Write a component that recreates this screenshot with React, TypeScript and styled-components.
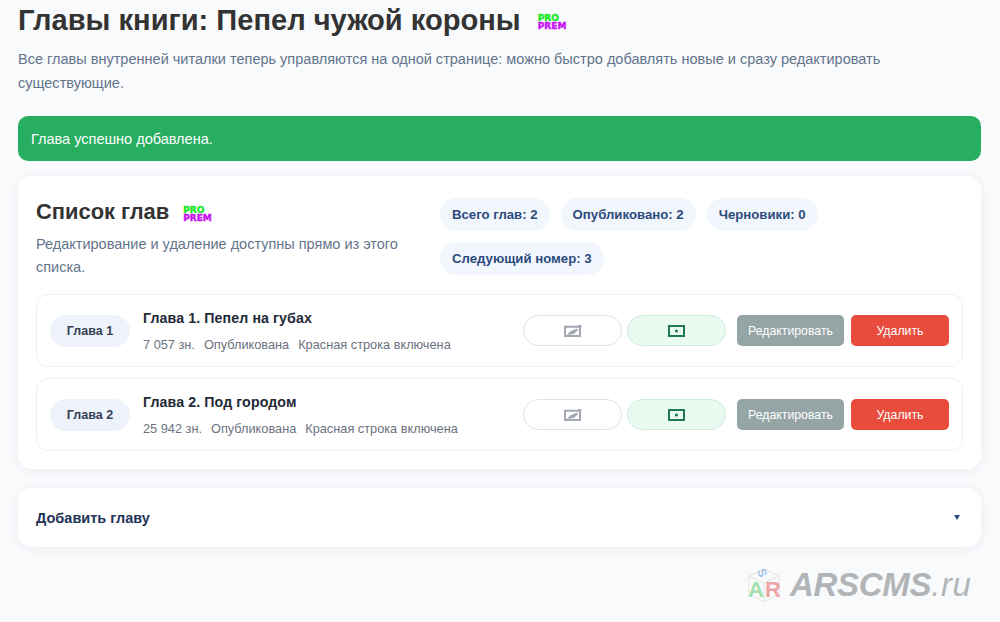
import React from "react";
import styled, { createGlobalStyle } from "styled-components";

const GlobalStyle = createGlobalStyle`
  html, body {
    margin: 0;
    padding: 0;
    background: #f8fafc;
    font-family: "Liberation Sans", Arial, sans-serif;
    overflow: hidden;
  }
`;

const Page = styled.div`
  position: relative;
  width: 1000px;
  height: 622px;
  box-sizing: border-box;
  padding: 0 19px 0 18px;
  overflow: hidden;
`;

const TitleRow = styled.div`
  display: flex;
  align-items: center;
  height: 40px;
`;

const Title = styled.h1`
  margin: 0;
  font-size: 29.1px;
  line-height: 40px;
  font-weight: 700;
  color: #333;
`;

const Intro = styled.p`
  margin: 7px 0 0;
  width: 900px;
  font-size: 14.53px;
  line-height: 24px;
  color: #64748b;
`;

const Alert = styled.div`
  margin-top: 21px;
  height: 45px;
  box-sizing: border-box;
  padding: 0 13px;
  display: flex;
  align-items: center;
  background: #27ae60;
  border-radius: 10px;
  color: #fff;
  font-size: 14.5px;
`;

const Badge = styled.span<{ $offset: number }>`
  display: inline-flex;
  flex-direction: column;
  margin: 3px 0 0 ${(p) => p.$offset}px;
  font-family: "DejaVu Sans", sans-serif;
  font-size: 9px;
  line-height: 8px;
  font-weight: 700;
  -webkit-text-stroke: 0.5px currentColor;
`;

const BadgePro = styled.span`
  color: #1ee82a;
`;

const BadgePrem = styled.span`
  color: #c814f0;
`;

const Card = styled.section`
  margin-top: 15px;
  background: #fff;
  border-radius: 14px;
  box-shadow: 0 2px 12px rgba(30, 50, 90, 0.06);
  padding: 18px;
`;

const CardHead = styled.div`
  display: flex;
  gap: 23px;
  height: 100px;
`;

const HeadText = styled.div`
  width: 381px;
`;

const CardTitleRow = styled.div`
  display: flex;
  align-items: center;
  height: 36px;
`;

const CardTitle = styled.h2`
  margin: 0;
  font-size: 21.9px;
  font-weight: 700;
  color: #333;
`;

const CardNote = styled.p`
  margin: 3px 0 0;
  font-size: 14.5px;
  line-height: 23px;
  color: #64748b;
`;

const Stats = styled.div`
  flex: 1;
  display: flex;
  flex-wrap: wrap;
  align-content: flex-start;
  gap: 11px;
  padding-top: 4px;
`;

const Stat = styled.span`
  height: 33px;
  box-sizing: border-box;
  padding: 0 12px;
  display: flex;
  align-items: center;
  background: #f2f7fd;
  border-radius: 17px;
  font-size: 13.2px;
  font-weight: 700;
  color: #2c4a7c;
`;

const Rows = styled.div`
  display: flex;
  flex-direction: column;
  gap: 11px;
`;

const Row = styled.article`
  height: 73px;
  box-sizing: border-box;
  border: 1px solid #edf0f4;
  border-radius: 12px;
  padding: 0 13px;
  display: flex;
  align-items: center;
`;

const Number = styled.span`
  width: 80px;
  height: 32px;
  flex: none;
  display: flex;
  align-items: center;
  justify-content: center;
  background: #eef2fa;
  border-radius: 16px;
  font-size: 12.5px;
  font-weight: 700;
  color: #334155;
`;

const RowBody = styled.div`
  flex: 1;
  margin-left: 13px;
`;

const RowTitle = styled.div`
  font-size: 14.2px;
  line-height: 18px;
  font-weight: 700;
  color: #1f2937;
  letter-spacing: 0.1px;
`;

const Meta = styled.div`
  margin-top: 10px;
  display: flex;
  gap: 9px;
  font-size: 12.75px;
  line-height: 16px;
  color: #6b7280;
`;

const Actions = styled.div`
  display: flex;
  align-items: center;
  gap: 5px;
`;

const Toggle = styled.span<{ $on?: boolean }>`
  width: 99px;
  height: 31px;
  box-sizing: border-box;
  display: flex;
  align-items: center;
  justify-content: center;
  border-radius: 16px;
  border: 1px solid ${(p) => (p.$on ? "#cfeadb" : "#dfe3e8")};
  background: ${(p) => (p.$on ? "#e9fbf1" : "#fff")};
`;

const ActionButton = styled.button<{ $color: string; $width: number; $gap: number }>`
  width: ${(p) => p.$width}px;
  height: 31px;
  margin-left: ${(p) => p.$gap}px;
  border: 0;
  border-radius: 5px;
  padding: 0;
  background: ${(p) => p.$color};
  color: #fff;
  font-family: inherit;
  font-size: 12.3px;
`;

const AddPanel = styled.div`
  margin-top: 19px;
  height: 59px;
  box-sizing: border-box;
  padding: 0 21px 0 18px;
  display: flex;
  align-items: center;
  justify-content: space-between;
  background: #fff;
  border-radius: 14px;
  box-shadow: 0 2px 12px rgba(30, 50, 90, 0.06);
  font-size: 14.5px;
  font-weight: 700;
  color: #1e3355;
`;

const Caret = styled.span`
  width: 0;
  height: 0;
  border-left: 3px solid transparent;
  border-right: 3px solid transparent;
  border-top: 5px solid #2c4a7c;
`;

const Watermark = styled.div`
  position: absolute;
  left: 746px;
  top: 566px;
  display: flex;
  align-items: center;
  height: 38px;
  pointer-events: none;
`;

const Cube = styled.div`
  position: relative;
  width: 38px;
  height: 38px;
  font-weight: 700;
`;

const CubeLines = styled.svg`
  position: absolute;
  left: 0;
  top: 0;
`;

const CubeLetter = styled.span<{ $x: number; $y: number; $c: string; $s: number; $r: number }>`
  position: absolute;
  left: ${(p) => p.$x}px;
  top: ${(p) => p.$y}px;
  color: ${(p) => p.$c};
  font-size: ${(p) => p.$s}px;
  line-height: 1;
  transform: rotate(${(p) => p.$r}deg);
`;

const Brand = styled.span`
  margin-left: 6px;
  font-size: 33px;
  line-height: 38px;
  font-style: italic;
  font-weight: 700;
  color: #b2b5b8;
  letter-spacing: -0.3px;
`;

const BrandTail = styled.span`
  font-weight: 400;
  letter-spacing: 0.6px;
`;

const ProBadge = ({ offset }: { offset: number }) => (
  <Badge $offset={offset}>
    <BadgePro>PRO</BadgePro>
    <BadgePrem>PREM</BadgePrem>
  </Badge>
);

const chapters = [
  { num: "Глава 1", title: "Глава 1. Пепел на губах", size: "7 057 зн." },
  { num: "Глава 2", title: "Глава 2. Под городом", size: "25 942 зн." },
];

const App = () => {
  return (
    <Page>
      <GlobalStyle />
      <TitleRow>
        <Title>Главы книги: Пепел чужой короны</Title>
        <ProBadge offset={17} />
      </TitleRow>
      <Intro>
        Все главы внутренней читалки теперь управляются на одной странице: можно быстро
        добавлять новые и сразу редактировать существующие.
      </Intro>
      <Alert>Глава успешно добавлена.</Alert>

      <Card>
        <CardHead>
          <HeadText>
            <CardTitleRow>
              <CardTitle>Список глав</CardTitle>
              <ProBadge offset={14} />
            </CardTitleRow>
            <CardNote>Редактирование и удаление доступны прямо из этого списка.</CardNote>
          </HeadText>
          <Stats>
            <Stat>Всего глав: 2</Stat>
            <Stat>Опубликовано: 2</Stat>
            <Stat>Черновики: 0</Stat>
            <Stat>Следующий номер: 3</Stat>
          </Stats>
        </CardHead>
        <Rows>
          {chapters.map((c) => (
            <Row key={c.num}>
              <Number>{c.num}</Number>
              <RowBody>
                <RowTitle>{c.title}</RowTitle>
                <Meta>
                  <span>{c.size}</span>
                  <span>Опубликована</span>
                  <span>Красная строка включена</span>
                </Meta>
              </RowBody>
              <Actions>
                <Toggle>
                  <svg width="18" height="12" viewBox="0 0 18 12">
                    <path d="M1 1.8h15v9.2H1z" fill="none" stroke="#a3a8b2" strokeWidth="2" />
                    <path d="M3 10l3-3.5 7-3 1 1.5-4 4z" fill="#a3a8b2" />
                    <path d="M14 0h3.5v2.5H14z" fill="#a3a8b2" />
                  </svg>
                </Toggle>
                <Toggle $on>
                  <svg width="17" height="12" viewBox="0 0 17 12">
                    <rect x="1" y="1" width="15" height="10" fill="none" stroke="#1f7a4d" strokeWidth="2" />
                    <circle cx="8.5" cy="6" r="1.6" fill="#1f7a4d" />
                  </svg>
                </Toggle>
                <ActionButton $color="#95a5a6" $width={107} $gap={6}>
                  Редактировать
                </ActionButton>
                <ActionButton $color="#e74c3c" $width={98} $gap={2}>
                  Удалить
                </ActionButton>
              </Actions>
            </Row>
          ))}
        </Rows>
      </Card>

      <AddPanel>
        <span>Добавить главу</span>
        <Caret />
      </AddPanel>

      <Watermark>
        <Cube>
          <CubeLines width="38" height="38" viewBox="0 0 38 38">
            <path
              d="M3 10L18 3l15 7-15 7zM3 10v18l15 8 15-8V10M18 17v19"
              fill="none"
              stroke="#e6e3dc"
              strokeWidth="1"
            />
          </CubeLines>
          <CubeLetter $x={12} $y={1} $c="#9cc3e8" $s={12} $r={70}>S</CubeLetter>
          <CubeLetter $x={2} $y={13} $c="#a5e0b0" $s={22} $r={0}>A</CubeLetter>
          <CubeLetter $x={19} $y={13} $c="#eda5a5" $s={22} $r={0}>R</CubeLetter>
        </Cube>
        <Brand>
          ARSCMS<BrandTail>.ru</BrandTail>
        </Brand>
      </Watermark>
    </Page>
  );
};

export default App;
